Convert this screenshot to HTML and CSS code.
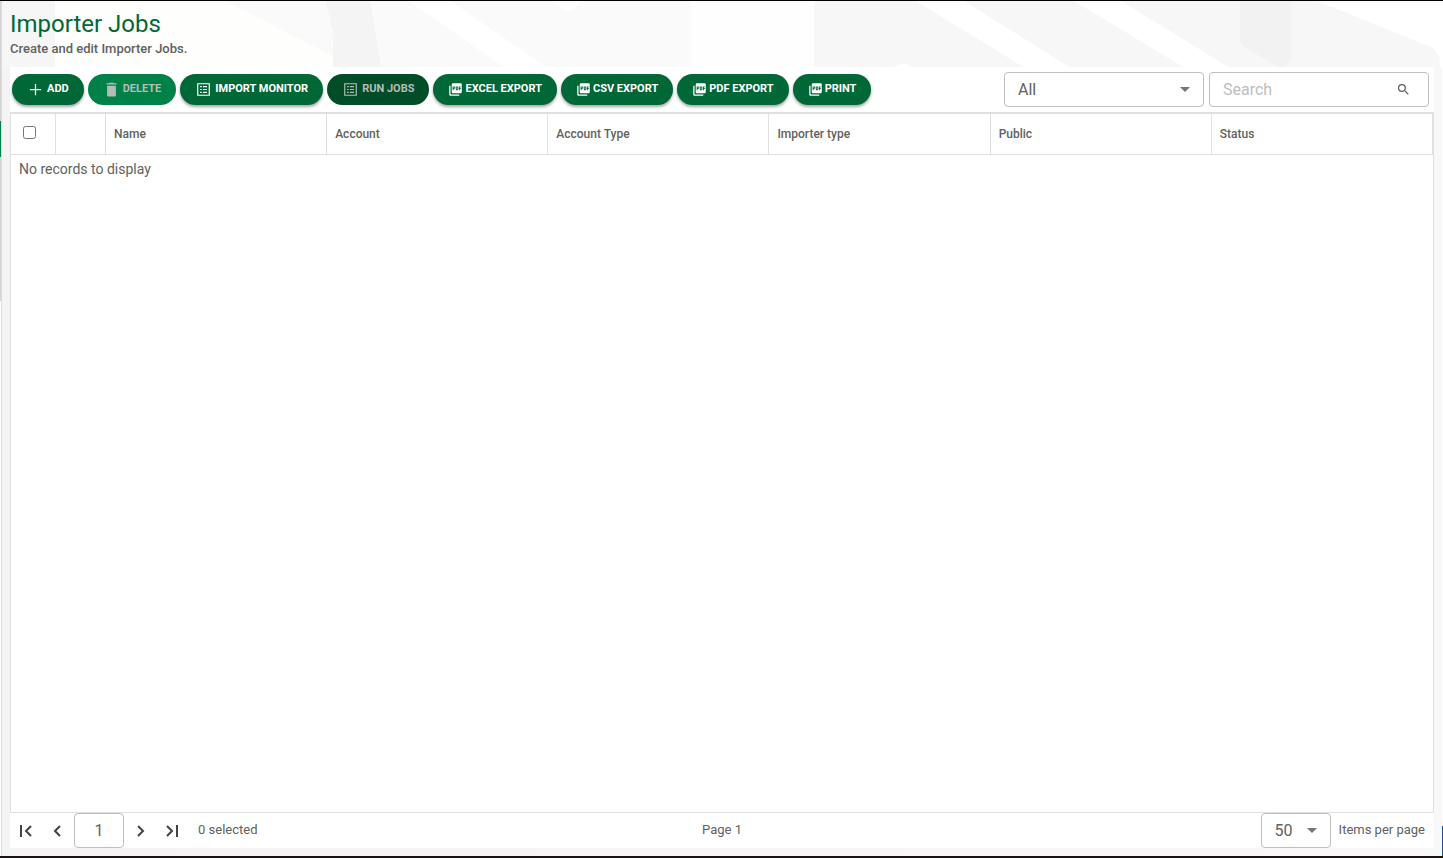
FILE: index.html
```html
<!DOCTYPE html>
<html lang="en">
<head>
    <meta charset="UTF-8">
    <meta name="viewport" content="width=device-width, initial-scale=1.0">
    <title>Importer Jobs</title>
    <link rel="stylesheet" href="styles.css">
</head>
<body>
    <!-- shared icons -->
    <svg class="sprite" aria-hidden="true">
        <symbol id="icon-add" viewBox="0 0 24 24"><path d="M21 13h-8v8h-2v-8H3v-2h8V3h2v8h8z"/></symbol>
        <symbol id="icon-delete" viewBox="0 0 24 24"><path d="M5 21c0 1.100.9 2 2 2h10c1.100 0 2-.9 2-2V6H5v15zM20 2h-4l-1-1H9L8 2H4v2h16V2z"/></symbol>
        <symbol id="icon-list" viewBox="-1 -1 26 26"><path fill-rule="evenodd" d="M1 1h22v22H1zM3 3v18h18V3zM6 6h3v2H6zM11 6h7v2h-7zM6 11h3v2H6zM11 11h7v2h-7zM6 16h3v2H6zM11 16h7v2h-7z"/></symbol>
        <symbol id="icon-pdf" viewBox="0 0 24 24"><path d="M20 2H8c-1.100 0-2 .9-2 2v12c0 1.100.9 2 2 2h12c1.100 0 2-.9 2-2V4c0-1.100-.9-2-2-2zm-8.500 7.500c0 .83-.67 1.500-1.500 1.500H9v2H7.500V7H10c.83 0 1.500.67 1.500 1.500v1zm5 2c0 .83-.67 1.500-1.500 1.500h-2.500V7H15c.83 0 1.500.67 1.500 1.500v3zm4-3H19v1h1.500V11H19v2h-1.500V7h3v1.500zM9 9.500h1v-1H9v1zM4 6H2v14c0 1.100.9 2 2 2h14v-2H4V6zm10 5.500h1v-3h-1v3z"/></symbol>
        <symbol id="icon-search" viewBox="0 0 24 24"><path d="M15.500 14h-.79l-.28-.27A6.470 6.470 0 0 0 16 9.500 6.500 6.500 0 1 0 9.500 16c1.610 0 3.090-.59 4.230-1.570l.27.28v.79l5 4.990L20.490 19l-4.990-5zm-6 0C7.010 14 5 11.990 5 9.500S7.010 5 9.500 5 14 7.010 14 9.500 11.990 14 9.500 14z"/></symbol>
        <symbol id="icon-arrow" viewBox="0 0 10 5"><path d="M0 0h10L5 5z"/></symbol>
    </svg>

    <svg class="backdrop" viewBox="0 0 1443 67" preserveAspectRatio="xMinYMin slice" aria-hidden="true">
        <rect width="1443" height="67" fill="#fafafa"/>
        <path d="M2 0h53v67H2z" fill="#f6f6f6"/>
        <path d="M225 0l131 67H55V0z" fill="#fefefd"/>
        <path d="M326 0h44l11 67h-48V33z" fill="#f4f4f4"/>
        <path d="M409 0h41l98 67h-43z" fill="#fff"/>
        <path d="M552 0h28q-10 18-20 6z" fill="#fff"/>
        <path d="M641 0h173v67H641z" fill="#fefefe"/>
        <path d="M641 0h50v67h-50z" fill="#fafafa"/>
        <path d="M814 0h629v67H814z" fill="#f7f7f7"/>
        <path d="M893 67q11-9 20 0zM916 0h48l107 67h-46zM1074 0h47l109 67h-45zM1318 0h125v67h-3l-1-12-6-8z" fill="#fff"/>
        <path d="M1240 0h51v56q-3 15-17 8l-29-18q-5-3-5-9z" fill="#f2f2f2"/>
    </svg>

    <div class="edge edge-left" aria-hidden="true">
        <span class="edge-menu"></span>
    </div>
    <div class="edge edge-right" aria-hidden="true"></div>

    <main>
        <header>
            <h1>Importer Jobs</h1>
            <p>Create and edit Importer Jobs.</p>
        </header>

        <section class="grid-panel">
            <div class="toolbar">
                <div class="actions">
                    <button type="button" class="btn"><svg><use href="#icon-add"/></svg>Add</button>
                    <button type="button" class="btn btn-delete" disabled><svg><use href="#icon-delete"/></svg>Delete</button>
                    <button type="button" class="btn"><svg><use href="#icon-list"/></svg>Import Monitor</button>
                    <button type="button" class="btn btn-run" disabled><svg><use href="#icon-list"/></svg>Run Jobs</button>
                    <button type="button" class="btn btn-export"><svg><use href="#icon-pdf"/></svg>Excel Export</button>
                    <button type="button" class="btn btn-export"><svg><use href="#icon-pdf"/></svg>CSV Export</button>
                    <button type="button" class="btn btn-export"><svg><use href="#icon-pdf"/></svg>PDF Export</button>
                    <button type="button" class="btn btn-export"><svg><use href="#icon-pdf"/></svg>Print</button>
                </div>
                <div class="filters">
                    <div class="field field-filter">
                        <select aria-label="Filter column">
                            <option>All</option>
                            <option>Name</option>
                            <option>Account</option>
                        </select>
                        <svg class="arrow"><use href="#icon-arrow"/></svg>
                    </div>
                    <div class="field field-search">
                        <input type="text" aria-label="Search" placeholder="Search">
                        <button type="button" aria-label="Run search"><svg><use href="#icon-search"/></svg></button>
                    </div>
                </div>
            </div>

            <div class="grid-body">
                <table>
                    <colgroup>
                        <col class="col-check">
                        <col class="col-icon">
                        <col span="6">
                    </colgroup>
                    <thead>
                        <tr>
                            <th><input type="checkbox" aria-label="Select all"></th>
                            <th></th>
                            <th>Name</th>
                            <th>Account</th>
                            <th>Account Type</th>
                            <th>Importer type</th>
                            <th>Public</th>
                            <th>Status</th>
                        </tr>
                    </thead>
                    <tbody>
                        <tr>
                            <td colspan="8">No records to display</td>
                        </tr>
                    </tbody>
                </table>
            </div>

            <div class="pager">
                <div class="pager-nav">
                    <button type="button" aria-label="First page"><svg viewBox="0 0 14 14"><path d="M2 1v12M12 2L7 7l5 5"/></svg></button>
                    <button type="button" aria-label="Previous page"><svg viewBox="0 0 14 14"><path d="M9 2L4 7l5 5"/></svg></button>
                    <input type="text" class="page-number" aria-label="Page number" value="1">
                    <button type="button" aria-label="Next page"><svg viewBox="0 0 14 14"><path d="M5 2l5 5-5 5"/></svg></button>
                    <button type="button" aria-label="Last page"><svg viewBox="0 0 14 14"><path d="M2 2l5 5-5 5M12 1v12"/></svg></button>
                    <span class="pager-text selected">0 selected</span>
                </div>
                <span class="pager-text">Page 1</span>
                <div class="pager-size">
                    <div class="field field-size">
                        <select id="page-size">
                            <option>50</option>
                            <option>100</option>
                        </select>
                        <svg class="arrow"><use href="#icon-arrow"/></svg>
                    </div>
                    <label for="page-size" class="pager-text">Items per page</label>
                </div>
            </div>
        </section>
    </main>
</body>
</html>
```
FILE: styles.css
```css
* {
    box-sizing: border-box;
}

body {
    position: relative;
    min-height: 100vh;
    margin: 0;
    display: flex;
    background: linear-gradient(90deg, #f4f4f4, #f8f8f8);
    border-top: 1px solid #000;
    border-bottom: 2px solid #1c1114;
    font-family: Roboto, sans-serif;
    font-size: 13px;
    color: #616161;
}

.sprite {
    position: absolute;
    width: 0;
    height: 0;
}

.backdrop {
    position: absolute;
    top: 0;
    left: 0;
    width: 100%;
    height: 66px;
}

/* slivers of the neighbouring panels */
.edge {
    position: absolute;
    top: 0;
    bottom: 0;
}

.edge-left {
    left: 0;
    width: 2px;
    padding-top: 120px;
    border-right: 1px solid #dcdcdc;
    background: linear-gradient(#d5d5d5 300px, #fff 300px);
}

.edge-menu {
    display: block;
    height: 36px;
    background: #008148;
}

.edge-right {
    right: 0;
    width: 1px;
    background: #fff;
    border-bottom: 30px solid #1f4e9c;
}

main {
    position: relative;
    flex: 1;
    display: flex;
    flex-direction: column;
    min-width: 0;
    padding: 8px 9px 8px 10px;
}

header {
    height: 58px;
}

h1 {
    margin: 0;
    font-size: 24px;
    font-weight: 400;
    line-height: 30px;
    color: #006837;
}

header p {
    margin: 0;
    font-weight: 500;
    line-height: 20px;
}

.grid-panel {
    flex: 1;
    display: flex;
    flex-direction: column;
    background: #fff;
}

.toolbar {
    display: flex;
    flex-wrap: wrap;
    align-items: center;
    justify-content: space-between;
    gap: 4px;
    padding: 5px 5px 5px 2px;
}

.actions {
    display: flex;
    flex-wrap: wrap;
    gap: 4px;
}

.btn {
    display: flex;
    align-items: center;
    gap: 4px;
    height: 31px;
    padding: 0 15px 2px 16px;
    border: none;
    border-radius: 16px;
    background: #006837;
    box-shadow: 0 2px 3px rgba(0, 0, 0, 0.35);
    color: #fff;
    font-family: inherit;
    font-size: 11px;
    font-weight: 700;
    text-transform: uppercase;
    white-space: nowrap;
    cursor: pointer;
}

.btn svg {
    width: 15px;
    height: 15px;
    margin-top: 2px;
    fill: currentColor;
}

.btn-export {
    gap: 2px;
    padding-left: 15px;
}

.btn-delete,
.btn-run {
    box-shadow: none;
    color: #b5bdb8;
    cursor: default;
}

.btn-delete {
    background: #008148;
}

.btn-run {
    background: #004d28;
}

.filters {
    display: flex;
    gap: 5px;
}

.field {
    display: grid;
    align-items: center;
    height: 35px;
    border: 1px solid #bdbdbd;
    border-radius: 4px;
    background: #fff;
}

.field select,
.field input {
    grid-area: 1 / 1;
    width: 100%;
    height: 33px;
    padding: 0 13px;
    border: none;
    background: none;
    appearance: none;
    outline: none;
    font-family: inherit;
    font-size: 16px;
    color: #616161;
}

.field input::placeholder {
    color: #bdbdbd;
}

.field button {
    grid-area: 1 / 1;
    justify-self: end;
    display: flex;
    margin-right: 17px;
    padding: 0;
    border: none;
    background: none;
    cursor: pointer;
}

.field button svg {
    width: 15px;
    height: 15px;
    fill: #616161;
}

.arrow {
    grid-area: 1 / 1;
    justify-self: end;
    width: 10px;
    height: 5px;
    margin-right: 13px;
    fill: #757575;
    pointer-events: none;
}

.field-filter {
    width: 200px;
}

.field-search {
    width: 220px;
}

.field-size {
    width: 70px;
}

.grid-body {
    flex: 1;
    border: 1px solid #e0e0e0;
    border-top-width: 2px;
}

table {
    width: 100%;
    table-layout: fixed;
    border-collapse: separate;
    border-spacing: 0;
}

.col-check {
    width: 45px;
}

.col-icon {
    width: 50px;
}

th {
    height: 41px;
    padding: 0 8px;
    border-right: 1px solid #e0e0e0;
    border-bottom: 1px solid #e0e0e0;
    font-size: 12px;
    font-weight: 500;
    text-align: left;
}

th input {
    display: block;
    width: 13px;
    height: 13px;
    margin: 0 0 4px 4px;
}

td {
    padding: 4px 8px;
    font-size: 14px;
    line-height: 20px;
}

.pager {
    display: grid;
    grid-template-columns: 1fr auto 1fr;
    align-items: center;
    height: 35px;
}

.pager-nav {
    display: flex;
    align-items: center;
}

.pager-nav button {
    display: flex;
    justify-content: center;
    width: 32px;
    padding: 0;
    border: none;
    background: none;
    cursor: pointer;
}

.pager-nav svg {
    width: 14px;
    height: 14px;
    fill: none;
    stroke: #424242;
    stroke-width: 2;
}

.pager-text {
    padding-bottom: 2px;
}

.page-number {
    width: 50px;
    height: 35px;
    border: 1px solid #bdbdbd;
    border-radius: 4px;
    font-family: inherit;
    font-size: 16px;
    color: #616161;
    text-align: center;
}

.selected {
    margin-left: 10px;
}

.pager-size {
    display: flex;
    align-items: center;
    justify-content: flex-end;
    gap: 8px;
    padding-right: 9px;
}
```
